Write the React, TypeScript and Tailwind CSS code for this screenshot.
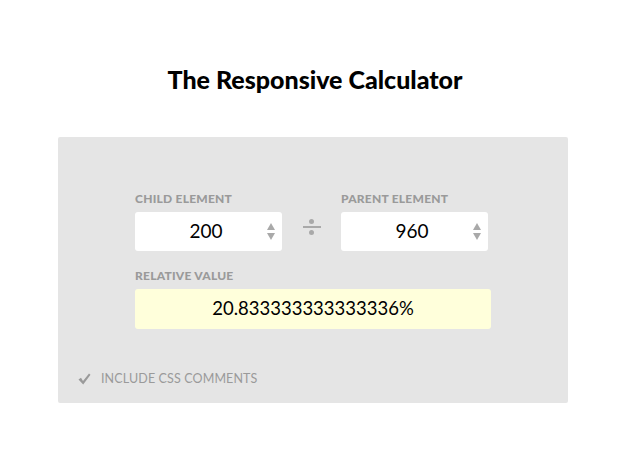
import { ReactNode } from "react";

const font = { fontFamily: "Lato, 'Open Sans', sans-serif" };

function Spinner() {
  return (
    <div className="flex flex-col items-center gap-[3px] text-[#a9a9a9]">
      <svg width="8" height="7" viewBox="0 0 8 7">
        <path d="M4 0 L8 7 L0 7 Z" fill="currentColor" />
      </svg>
      <svg width="8" height="7" viewBox="0 0 8 7">
        <path d="M0 0 L8 0 L4 7 Z" fill="currentColor" />
      </svg>
    </div>
  );
}

function Label({ children }: { children: ReactNode }) {
  return (
    <div className="h-[14px] text-[12px] font-black leading-[14px] tracking-[0.02em] text-[#9a9a9a]">
      {children}
    </div>
  );
}

function Field({ label, value }: { label: string; value: string }) {
  return (
    <div className="flex w-[147px] flex-col">
      <Label>{label}</Label>
      <div className="mt-[6px] flex h-[39px] items-center rounded-[3px] bg-white pl-[10px] pr-[7px]">
        <span className="flex-1 text-center text-[19px] text-black">{value}</span>
        <Spinner />
      </div>
    </div>
  );
}

export default function App() {
  return (
    <div style={font} className="flex h-[475px] w-[630px] flex-col items-center bg-white">
      <h1 className="mt-[64px] h-[30px] text-[25px] font-black leading-[30px] text-black">
        The Responsive Calculator
      </h1>

      <div className="ml-[-4px] mt-[43px] flex w-[510px] flex-col rounded-[2px] bg-[#e5e5e5] pb-[14px] pt-[55px]">
        <div className="pl-[77px]">
          <div className="flex items-start">
            <Field label="CHILD ELEMENT" value="200" />
            <div className="mt-[20px] flex w-[59px] flex-col items-center justify-center gap-[2px] pt-[7px] text-[#a9a9a9]">
              <span className="h-[5px] w-[5px] rounded-full bg-current" />
              <span className="h-[2px] w-[18px] bg-current" />
              <span className="h-[5px] w-[5px] rounded-full bg-current" />
            </div>
            <Field label="PARENT ELEMENT" value="960" />
          </div>

          <div className="mt-[18px]">
            <Label>RELATIVE VALUE</Label>
            <div className="mt-[6px] flex h-[40px] w-[356px] items-center justify-center rounded-[3px] bg-[#ffffdb] text-[18.5px] text-black">
              20.833333333333336%
            </div>
          </div>
        </div>

        <div className="mt-[41px] flex items-center gap-[10px] pl-[20px] text-[#9a9a9a]">
          <svg width="13" height="12" viewBox="0 0 13 12">
            <path d="M0.5 6.5 L3 4.8 L5 8 L11 0.5 L12.5 1.8 L5.2 11.5 Z" fill="currentColor" />
          </svg>
          <span className="text-[12.5px] tracking-[0.01em]">INCLUDE CSS COMMENTS</span>
        </div>
      </div>
    </div>
  );
}
